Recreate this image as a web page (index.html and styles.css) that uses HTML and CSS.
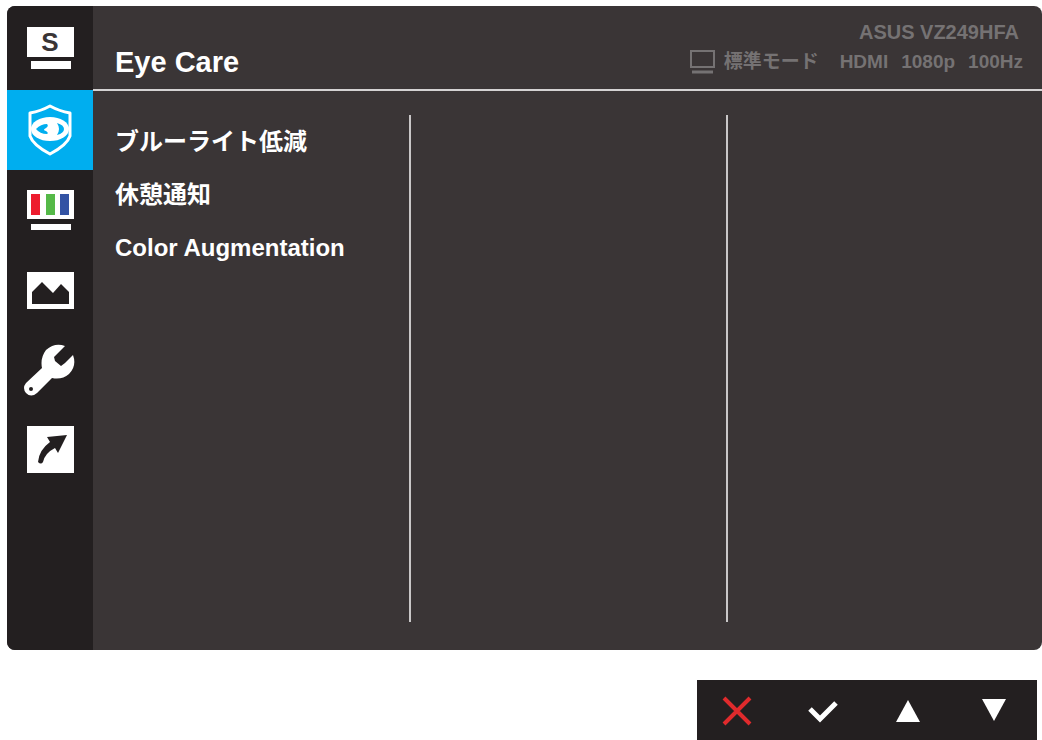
FILE: index.html
```html
<!DOCTYPE html>
<html lang="ja">
<head>
<meta charset="UTF-8">
<meta name="viewport" content="width=device-width, initial-scale=1.0">
<title>Eye Care</title>
<link rel="stylesheet" href="styles.css">
</head>
<body>
<div class="osd">
    <nav class="sidebar">
        <button type="button" class="tab tab-first" aria-label="Splendid">
            <svg width="48" height="42" viewBox="-1 0 48 42">
                <rect x="0" y="0" width="47" height="30" fill="#fff"/>
                <rect x="4" y="34" width="40" height="8" fill="#fff"/>
                <text x="23" y="24" class="icon-letter">S</text>
            </svg>
        </button>
        <button type="button" class="tab active" aria-label="Eye Care">
            <svg width="46" height="54" viewBox="0 0 46 54">
                <path d="M23 3 Q32 8 43 10 V33 Q40 42 23 51 Q6 42 3 33 V10 Q14 8 23 3 Z" fill="none" stroke="#fff" stroke-width="3" stroke-linejoin="round"/>
                <ellipse cx="23" cy="26" rx="19" ry="12" fill="#fff"/>
                <path d="M20 21 Q14 21 9 26 Q13 31 20 31 Q22 30 19 28 Q15 27 19 25 Q22 23 20 21 Z" fill="#00aeef"/>
                <path d="M30 20 Q37 22 37 26 Q37 30 30 32 Q34 26 30 20 Z" fill="#00aeef"/>
            </svg>
        </button>
        <button type="button" class="tab" aria-label="Color">
            <svg width="48" height="40" viewBox="-1 0 48 40">
                <rect x="0" y="0" width="47" height="29" fill="#fff"/>
                <rect x="4" y="4" width="9" height="21" fill="#ed1c2e"/>
                <rect x="19" y="4" width="9" height="21" fill="#55b948"/>
                <rect x="33" y="4" width="9" height="21" fill="#3353a4"/>
                <rect x="4" y="34" width="40" height="6" fill="#fff"/>
            </svg>
        </button>
        <button type="button" class="tab" aria-label="Image">
            <svg width="48" height="38" viewBox="-1 -1 48 38">
                <rect x="0" y="0" width="47" height="37" fill="#fff"/>
                <path d="M5 32 V20 L15 10 L26 21 L34 12 L42 20 V32 Z" fill="#231f20"/>
            </svg>
        </button>
        <button type="button" class="tab" aria-label="System Setup">
            <svg width="52" height="52" viewBox="0 0 52 52">
                <path d="M41 2 L30 13 L31 17 L37 22 L41 19 L49 11 Q53 22 45 30 Q38 36 28 34 L13 49 Q7 54 2 49 Q-2 44 2 39 L18 24 Q16 14 22 6 Q31 -2 41 2 Z" fill="#fff"/>
                <circle cx="7" cy="45" r="2" fill="#231f20"/>
            </svg>
        </button>
        <button type="button" class="tab" aria-label="Shortcut">
            <svg width="48" height="48" viewBox="-1 0 48 48">
                <rect x="0" y="0" width="47" height="47" fill="#fff"/>
                <path d="M20 11 L40 9 L31 27 L28 22 Q18 27 16 36 Q14 39 11 36 Q12 24 23 16 Z" fill="#231f20"/>
            </svg>
        </button>
    </nav>

    <main class="screen">
        <header class="topbar">
            <h1>Eye Care</h1>
            <div class="status">
                <p class="model">ASUS VZ249HFA</p>
                <p class="signal">
                    <svg width="26" height="26" viewBox="0 0 26 26" fill="none" stroke="currentColor">
                        <rect x="1" y="2" width="23" height="16" stroke-width="2"/>
                        <path d="M2 23 H23" stroke-width="3"/>
                    </svg>
                    <span class="mode">標準モード</span>
                    <span>HDMI</span>
                    <span>1080p</span>
                    <span>100Hz</span>
                </p>
            </div>
        </header>
        <div class="columns">
            <ul class="menu">
                <li><button type="button">ブルーライト低減</button></li>
                <li><button type="button">休憩通知</button></li>
                <li><button type="button">Color Augmentation</button></li>
            </ul>
            <div class="column"></div>
            <div class="column"></div>
        </div>
    </main>
</div>

<div class="keys">
    <button type="button" aria-label="Close">
        <svg width="32" height="32" viewBox="0 0 32 32"><path d="M3 3 L29 29 M29 3 L3 29" stroke="#e02a2c" stroke-width="4"/></svg>
    </button>
    <button type="button" aria-label="OK">
        <svg width="32" height="32" viewBox="0 0 32 32"><path d="M3 14 L13 24 L29 8" fill="none" stroke="#fff" stroke-width="5"/></svg>
    </button>
    <button type="button" aria-label="Up">
        <svg width="32" height="32" viewBox="0 0 32 32"><path d="M16 5 L28 27 H4 Z" fill="#fff"/></svg>
    </button>
    <button type="button" aria-label="Down">
        <svg width="32" height="32" viewBox="0 0 32 32"><path d="M4 4 H28 L16 26 Z" fill="#fff"/></svg>
    </button>
</div>
</body>
</html>
```
FILE: styles.css
```css
* { box-sizing: border-box; }
body {
    margin: 0;
    min-height: 100vh;
    padding: 6px 0 0 7px;
    display: flex;
    flex-direction: column;
    gap: 30px;
    background: #fff;
    color: #fff;
    font-family: "Liberation Sans", "Noto Sans CJK JP", sans-serif;
}
h1, p, ul { margin: 0; padding: 0; }
button { padding: 0; border: none; background: none; color: inherit; font: inherit; cursor: pointer; }
svg { display: block; }

.osd {
    flex: 1;
    display: flex;
    border-radius: 8px;
    overflow: hidden;
    background: #3a3536;
}
.sidebar { width: 86px; background: #231f20; }
.tab { display: flex; align-items: center; justify-content: center; width: 100%; height: 80px; }
.tab-first { height: 84px; }
.tab.active { background: #00aeef; }
.icon-letter { font-size: 26px; font-weight: bold; text-anchor: middle; fill: #3a3536; }

.screen { flex: 1; display: flex; flex-direction: column; }
.topbar {
    height: 85px;
    padding: 0 19px 12px 22px;
    display: flex;
    align-items: flex-end;
    justify-content: space-between;
    border-bottom: 2px solid #d4d2d3;
}
h1 { font-size: 29px; line-height: 30px; }
.status { color: #757273; font-weight: bold; text-align: right; }
.model { padding-right: 4px; font-size: 20px; line-height: 30px; }
.signal { display: flex; align-items: center; gap: 13px; font-size: 19px; line-height: 30px; }
.signal svg { margin-right: -5px; }
.mode { margin-right: 8px; }

.columns { flex: 1; display: grid; grid-template-columns: repeat(3, 1fr); padding: 24px 0 28px; }
.column { border-left: 2px solid #c9c7c8; }
.menu { list-style: none; padding-left: 22px; font-size: 24px; line-height: 53px; }
.menu button { font-weight: bold; white-space: nowrap; }

.keys {
    align-self: flex-end;
    display: flex;
    align-items: center;
    justify-content: space-between;
    width: 340px;
    height: 60px;
    margin-right: 5px;
    padding: 2px 27px 0 24px;
    background: #231f20;
}
```
